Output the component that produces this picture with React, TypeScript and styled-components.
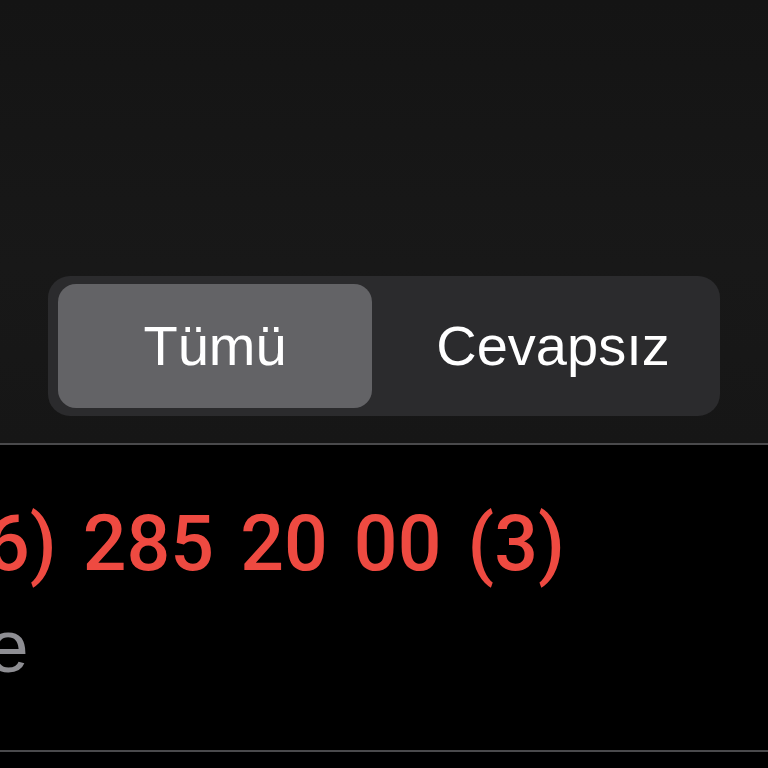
import React from "react";
import styled, { createGlobalStyle } from "styled-components";

const Global = createGlobalStyle`
  html, body { margin: 0; padding: 0; background: #000; }
  body { width: 768px; height: 768px; overflow: hidden; }
  * { box-sizing: border-box; }
`;

const Screen = styled.div`
  width: 768px;
  height: 768px;
  display: flex;
  flex-direction: column;
  background: #000;
  overflow: hidden;
`;

const Header = styled.header`
  height: 443px;
  flex: none;
  padding: 276px 48px 0 48px;
  background: linear-gradient(180deg, #141414 0%, #181818 60%, #161616 100%);
`;

const Segmented = styled.div`
  height: 140px;
  border-radius: 22px;
  background: #2b2b2d;
  padding: 8px 8px 8px 10px;
  display: grid;
  grid-template-columns: 314px 1fr;
`;

const Segment = styled.div<{ $active?: boolean; $shift?: number }>`
  height: 124px;
  line-height: 124px;
  border-radius: 18px;
  background: ${(p) => (p.$active ? "#636366" : "transparent")};
  color: #fff;
  font-family: "Liberation Sans", Arial, sans-serif;
  font-size: 56px;
  text-align: center;
  padding-left: ${(p) => p.$shift ?? 0}px;
  white-space: nowrap;
`;

const Divider = styled.div`
  height: 2px;
  flex: none;
  background: #4a4a4c;
`;

const CallRow = styled.div`
  height: 305px;
  flex: none;
  display: flex;
  flex-direction: column;
  padding-top: 54px;
  overflow: hidden;
`;

const Number = styled.div`
  font-family: Roboto, "Liberation Sans", sans-serif;
  font-weight: 500;
  font-size: 77px;
  line-height: 90px;
  height: 90px;
  color: #ee4a41;
  white-space: nowrap;
  word-spacing: 7px;
  margin-left: -172px;
`;

const Subtitle = styled.div`
  margin-top: 16px;
  font-family: "Liberation Sans", Arial, sans-serif;
  font-size: 74px;
  line-height: 83px;
  color: #8e8e93;
  white-space: nowrap;
  margin-left: -214px;
`;

export default function App() {
  return (
    <>
      <Global />
      <Screen>
        <Header>
          <Segmented>
            <Segment $active>Tümü</Segment>
            <Segment $shift={22}>Cevapsız</Segment>
          </Segmented>
        </Header>
        <Divider />
        <CallRow>
          <Number>(0216) 285 20 00 (3)</Number>
          <Subtitle>Türkiye</Subtitle>
        </CallRow>
        <Divider />
      </Screen>
    </>
  );
}
